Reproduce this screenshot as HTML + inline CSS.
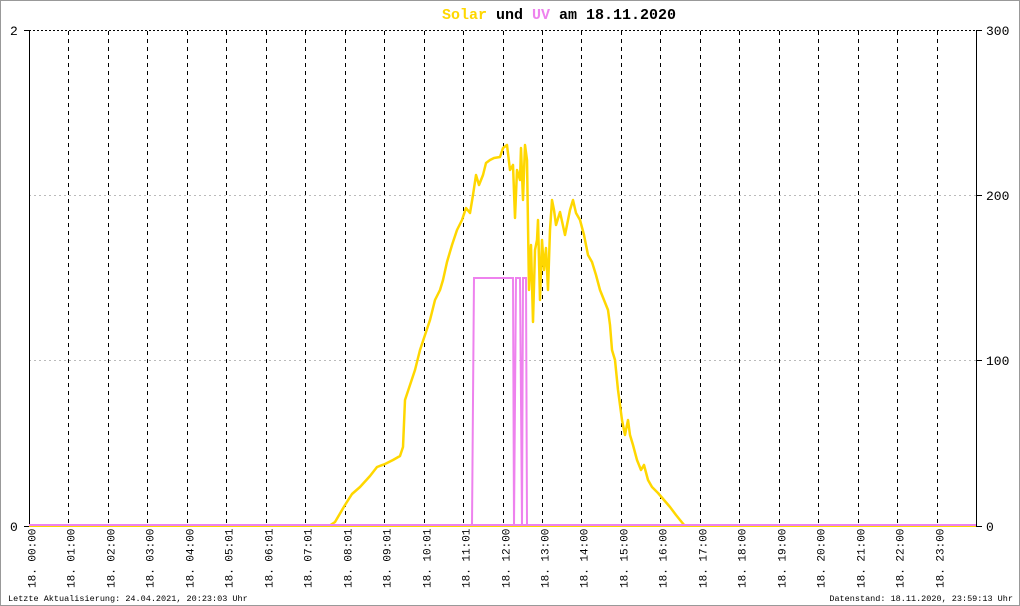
<!DOCTYPE html>
<html><head><meta charset="utf-8"><style>body{margin:0;background:#fff}svg{display:block}text{font-family:"Liberation Mono",monospace;font-size:11px}</style></head><body>
<svg width="1020" height="606" xmlns="http://www.w3.org/2000/svg">
<rect x="0.5" y="0.5" width="1019" height="605" fill="#fff" stroke="#999"/>
<text x="559" y="19" text-anchor="middle" style="font-size:15px;font-weight:bold"><tspan fill="#ffd700">Solar</tspan> und <tspan fill="#ee82ee">UV</tspan> am 18.11.2020</text>
<g stroke="#bbb" stroke-dasharray="2,3"><line x1="29" y1="195.5" x2="976" y2="195.5"/><line x1="29" y1="360.5" x2="976" y2="360.5"/></g>
<line x1="29" y1="30.5" x2="976" y2="30.5" stroke="#000" stroke-dasharray="2,2"/>
<g stroke="#000" stroke-dasharray="4,4" id="v"></g>
<g stroke="#000">
<line x1="29.5" y1="30" x2="29.5" y2="527"/><line x1="976.5" y1="30" x2="976.5" y2="527"/>
<line x1="24" y1="30.5" x2="30" y2="30.5"/><line x1="24" y1="526.5" x2="30" y2="526.5"/>
<line x1="976" y1="30.5" x2="982" y2="30.5"/><line x1="976" y1="195.5" x2="982" y2="195.5"/><line x1="976" y1="360.5" x2="982" y2="360.5"/><line x1="976" y1="526.5" x2="982" y2="526.5"/>
</g>
<text x="10" y="35" style="font-size:13px">2</text><text x="10" y="531" style="font-size:13px">0</text>
<text x="986" y="35" style="font-size:13px">300</text><text x="986" y="200" style="font-size:13px">200</text><text x="986" y="365" style="font-size:13px">100</text><text x="986" y="531" style="font-size:13px">0</text>
<line x1="29" y1="526" x2="976" y2="526" stroke="#ffd700" stroke-width="2"/>
<polyline fill="none" stroke="#ffd700" stroke-width="2.5" stroke-linejoin="round" points="329,526 335,522 345,505 352,494 360,487 370,476 377,467 385,464 393,460 400,456 403,447 405,400 410,385 415,370 420,350 425,335 430,320 435,300 440,290 443,280 447,262 452,245 457,230 462,220 466,208 470,213 473,195 476,175 479,185 483,175 486,163 490,160 494,158 500,157 503,148 507,145 510,170 513,165 515,218 517,170 520,180 521,148 523,200 525,145 527,160 529,290 531,245 533,322 535,250 537,240 538,220 540,300 542,240 544,270 546,248 548,290 550,230 552,200 554,210 556,225 560,212 565,235 570,210 573,200 576,213 580,220 584,235 588,255 592,262 596,275 600,290 604,300 608,310 610,325 612,350 615,360 618,390 622,420 625,435 628,420 630,435 633,445 637,460 641,470 644,465 648,480 652,487 658,493 664,500 670,507 676,515 680,520 685,526"/>
<line x1="29" y1="525" x2="976" y2="525" stroke="#ee82ee" stroke-width="2"/>
<polyline fill="none" stroke="#ee82ee" stroke-width="2" points="472,526 473,400 474,278 513,278 514,526 515,400 516,278 520,278 521,400 522,526 523,278 526,278 527,526"/>
<g id="lab"></g>
<text x="8" y="601" style="font-size:8.5px">Letzte Aktualisierung: 24.04.2021, 20:23:03 Uhr</text>
<text x="1013" y="601" text-anchor="end" style="font-size:8.5px">Datenstand: 18.11.2020, 23:59:13 Uhr</text>
</svg>
<script>
var ns="http://www.w3.org/2000/svg",v=document.getElementById("v"),lab=document.getElementById("lab");
var t=["00:00","01:00","02:00","03:00","04:00","05:01","06:01","07:01","08:01","09:01","10:01","11:01","12:00","13:00","14:00","15:00","16:00","17:00","18:00","19:00","20:00","21:00","22:00","23:00"];
for(var h=0;h<24;h++){var x=Math.round(29+39.46*h)+0.5;
if(h>0){var l=document.createElementNS(ns,"line");l.setAttribute("x1",x);l.setAttribute("x2",x);l.setAttribute("y1",31);l.setAttribute("y2",526);v.appendChild(l);}
var tx=document.createElementNS(ns,"text");tx.setAttribute("transform","translate("+(x+6)+",588) rotate(-90)");tx.textContent="18. "+t[h];lab.appendChild(tx);}
</script>
</body></html>
